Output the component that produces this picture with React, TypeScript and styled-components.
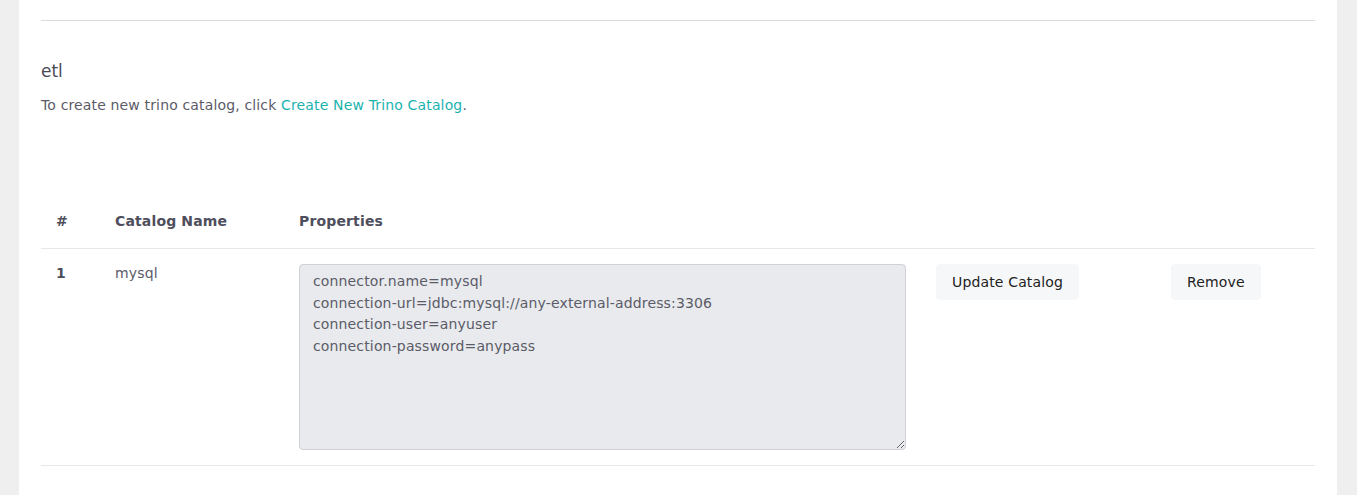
import React from "react";
import styled, { createGlobalStyle } from "styled-components";

const GlobalStyle = createGlobalStyle`
  html, body {
    margin: 0;
    padding: 0;
    background: #efefef;
  }
  body {
    font-family: "DejaVu Sans", "Noto Sans", sans-serif;
    color: #5b5b68;
  }
`;

const Page = styled.div`
  padding: 0 20px 0 19px;
  height: 495px;
  overflow: hidden;
`;

const Card = styled.div`
  background: #fff;
  padding: 20px 22px 40px 22px;
  min-height: 495px;
  box-sizing: border-box;
`;

const Divider = styled.hr`
  border: 0;
  border-top: 1px solid #dcdcdc;
  margin: 0;
`;

const Title = styled.h4`
  margin: 38px 0 0 0;
  font-size: 17px;
  font-weight: 400;
  line-height: 24px;
  color: #4a4a57;
`;

const Hint = styled.p`
  margin: 12px 0 0 0;
  font-size: 14px;
  letter-spacing: 0.15px;
  line-height: 20px;
  color: #5b5b68;
`;

const Link = styled.a`
  color: #1bb3b0;
  text-decoration: none;
  cursor: pointer;
`;

const Table = styled.table`
  width: 100%;
  table-layout: fixed;
  border-collapse: collapse;
  margin-top: 96px;
  font-size: 14px;
  letter-spacing: 0.15px;
`;

const Th = styled.th<{ $w?: number }>`
  box-sizing: border-box;
  text-align: left;
  font-weight: 700;
  color: #4e4e5c;
  padding: 0 15px 16px 15px;
  line-height: 21px;
  border-bottom: 1px solid #e8e8e8;
  width: ${(p) => (p.$w ? `${p.$w}px` : "auto")};
`;

const Td = styled.td<{ $bold?: boolean }>`
  vertical-align: top;
  padding: 15px;
  line-height: 18px;
  font-weight: ${(p) => (p.$bold ? 700 : 400)};
  color: ${(p) => (p.$bold ? "#4e4e5c" : "#5b5b68")};
  border-bottom: 1px solid #e8e8e8;
`;

const Props = styled.textarea`
  display: block;
  width: 607px;
  height: 186px;
  box-sizing: border-box;
  padding: 6px 13px;
  background: #e8eaed;
  border: 1px solid #cfd1d6;
  border-radius: 4px;
  font-family: inherit;
  font-size: 14px;
  letter-spacing: 0.15px;
  line-height: 21.7px;
  color: #5b5b68;
  resize: vertical;
`;

const Button = styled.button.attrs({ type: "button" })`
  height: 36px;
  padding: 0 16px;
  background: #f6f7f9;
  border: 0;
  border-radius: 4px;
  font-family: inherit;
  font-size: 14px;
  letter-spacing: 0.15px;
  color: #222;
  cursor: pointer;
`;

const rows = [
  {
    id: 1,
    name: "mysql",
    properties:
      "connector.name=mysql\nconnection-url=jdbc:mysql://any-external-address:3306\nconnection-user=anyuser\nconnection-password=anypass",
  },
];

const App: React.FC = () => {
  return (
    <Page>
      <GlobalStyle />
      <Card>
        <Divider />
        <Title>etl</Title>
        <Hint>
          To create new trino catalog, click <Link>Create New Trino Catalog</Link>.
        </Hint>
        <Table>
          <thead>
            <tr>
              <Th $w={59}>#</Th>
              <Th $w={184}>Catalog Name</Th>
              <Th $w={637}>Properties</Th>
              <Th $w={235}></Th>
              <Th></Th>
            </tr>
          </thead>
          <tbody>
            {rows.map((r) => (
              <tr key={r.id}>
                <Td $bold>{r.id}</Td>
                <Td>{r.name}</Td>
                <Td>
                  <Props defaultValue={r.properties} />
                </Td>
                <Td>
                  <Button>Update Catalog</Button>
                </Td>
                <Td>
                  <Button>Remove</Button>
                </Td>
              </tr>
            ))}
          </tbody>
        </Table>
      </Card>
    </Page>
  );
};

export default App;
